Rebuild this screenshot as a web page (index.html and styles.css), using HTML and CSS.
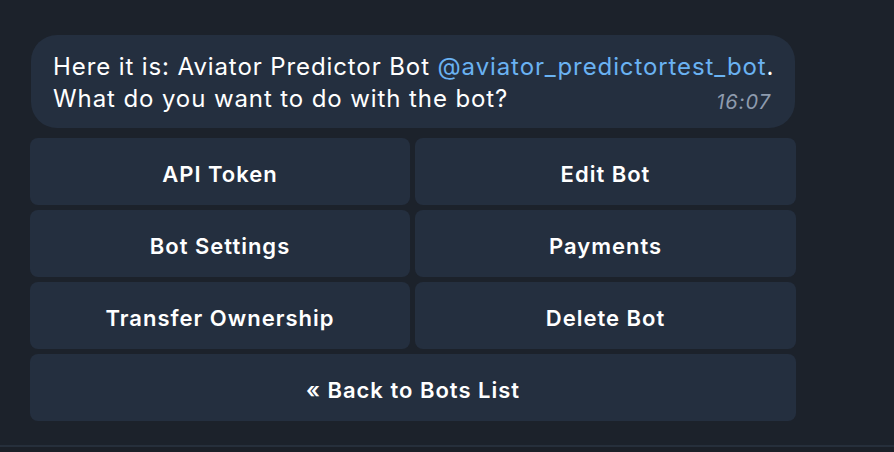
FILE: index.html
```html
<!DOCTYPE html>
<html>
<head>
<meta charset="utf-8">
<link rel="stylesheet" href="styles.css">
</head>
<body>
<div class="chat">
  <div class="msg">
    <div class="bubble">
      <span class="text">Here it is: Aviator Predictor Bot <span class="link">@aviator_predictortest_bot</span>.<br>What do you want to do with the bot?</span>
      <span class="time">16:07</span>
    </div>
    <div class="keyboard">
      <div class="btn">API Token</div>
      <div class="btn">Edit Bot</div>
      <div class="btn">Bot Settings</div>
      <div class="btn">Payments</div>
      <div class="btn">Transfer Ownership</div>
      <div class="btn">Delete Bot</div>
      <div class="btn wide">« Back to Bots List</div>
    </div>
  </div>
</div>
<div class="footer"></div>
</body>
</html>
```
FILE: styles.css
```css
html, body {
  margin: 0;
  padding: 0;
  background: #1c222b;
  height: 100%;
}
body {
  display: flex;
  flex-direction: column;
  font-family: Inter, "Noto Sans", sans-serif;
  color: #ffffff;
  overflow: hidden;
}
.chat {
  flex: 1;
  padding: 35px 0 0 30px;
}
.msg {
  width: 766px;
  display: flex;
  flex-direction: column;
  gap: 10px;
}
.bubble {
  position: relative;
  margin-left: 1px;
  width: 764px;
  box-sizing: border-box;
  background: #242f3f;
  border-radius: 26px;
  padding: 16px 0 0 22px;
  font-size: 24px;
  line-height: 32px;
  letter-spacing: 0.9px;
  height: 93px;
  white-space: nowrap;
}
.link {
  color: #6ab2f2;
}
.time {
  position: absolute;
  right: 24px;
  bottom: 15px;
  font-size: 20px;
  font-style: italic;
  color: #8e9bae;
  line-height: 22px;
  letter-spacing: 1px;
}
.keyboard {
  display: grid;
  grid-template-columns: 380px 381px;
  grid-auto-rows: 67px;
  gap: 5px;
}
.btn {
  background: #242f3f;
  border-radius: 8px;
  display: flex;
  align-items: center;
  justify-content: center;
  padding-top: 4px;
  box-sizing: border-box;
  font-size: 22px;
  font-weight: 600;
  letter-spacing: 1px;
}
.wide {
  grid-column: 1 / 3;
}
.footer {
  height: 5px;
  border-top: 2px solid #262f3b;
  background: #1b2028;
}
```
